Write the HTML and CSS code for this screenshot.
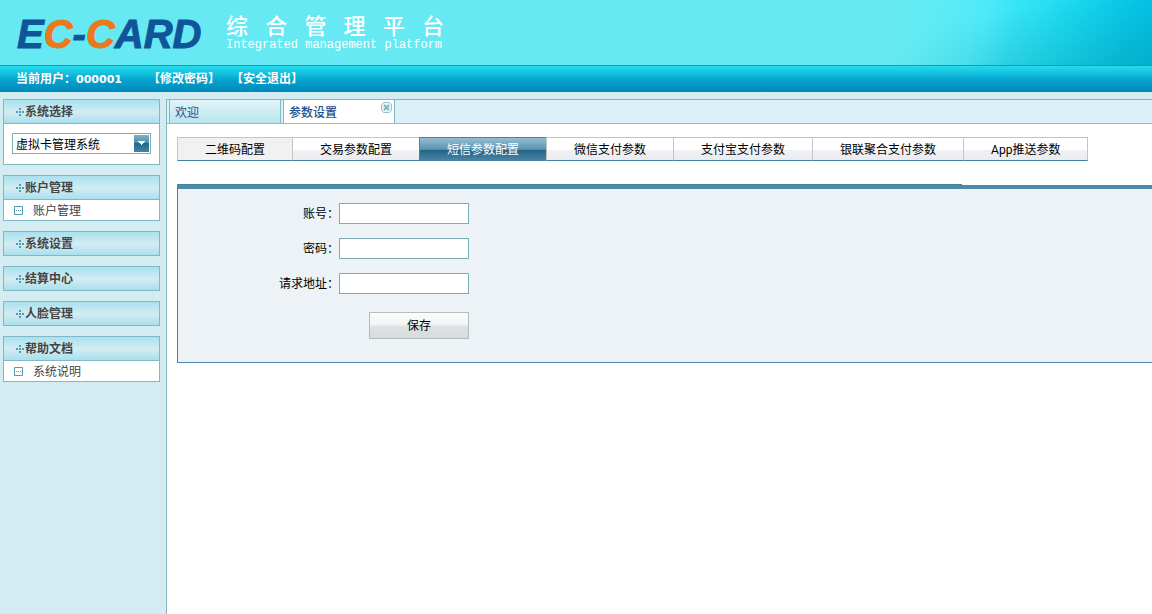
FILE: index.html
```html
<!DOCTYPE html>
<html lang="zh-CN">
<head>
<meta charset="utf-8">
<title>综合管理平台</title>
<link rel="stylesheet" href="styles.css">
</head>
<body>
<svg width="0" height="0" class="defs" aria-hidden="true">
  <symbol id="dots" viewBox="0 0 8 8">
    <path fill="#4f9cb5" d="M3 0h2v2H3zM3 3h2v2H3zM3 6h2v2H3zM0 3h2v2H0zM6 3h2v2H6z"/>
  </symbol>
  <symbol id="leaf" viewBox="0 0 9 9">
    <path fill="none" stroke="#4f9cb5" d="M.5.5h8v8h-8z"/>
    <path fill="#4f9cb5" d="M2 4h1v1H2zM4 4h1v1H4zM6 4h1v1H6z"/>
  </symbol>
</svg>
<header class="banner">
  <div class="logo"><span>E</span><span class="accent">C</span><span>-</span><span class="accent">C</span><span>ARD</span></div>
  <div class="product">
    <h1 class="product-name">综合管理平台</h1>
    <p class="product-sub">Integrated management platform</p>
  </div>
  <div class="banner-art"></div>
</header>
<nav class="userbar">
  <span class="user">当前用户：<b class="user-id">000001</b></span>
  <a class="userlink" href="#">【修改密码】</a>
  <a class="userlink" href="#">【安全退出】</a>
</nav>
<div class="workspace">
  <aside class="sidebar">
    <section class="group">
      <h2 class="group-head"><svg class="dots"><use href="#dots"/></svg><label for="system">系统选择</label></h2>
      <div class="picker">
        <div class="select-wrap">
          <select id="system" class="select"><option>虚拟卡管理系统</option></select>
          <svg class="select-arrow" viewBox="0 0 15 17">
            <defs><linearGradient id="ag" x2="0" y2="1"><stop offset="0" stop-color="#7fb0c5"/><stop offset=".48" stop-color="#4a8bab"/><stop offset=".5" stop-color="#226789"/><stop offset="1" stop-color="#4684a3"/></linearGradient></defs>
            <path fill="url(#ag)" d="M0 0h15v17H0z"/><path fill="#fff" d="M4 6h7v1h-1v1H9v1H8v1H7V9H6V8H5V7H4z"/>
          </svg>
        </div>
      </div>
    </section>
    <section class="group">
      <h2 class="group-head"><svg class="dots"><use href="#dots"/></svg>账户管理</h2>
      <a class="item" href="#"><svg class="leaf"><use href="#leaf"/></svg><span class="item-text">账户管理</span></a>
    </section>
    <section class="group">
      <h2 class="group-head"><svg class="dots"><use href="#dots"/></svg>系统设置</h2>
    </section>
    <section class="group">
      <h2 class="group-head"><svg class="dots"><use href="#dots"/></svg>结算中心</h2>
    </section>
    <section class="group">
      <h2 class="group-head"><svg class="dots"><use href="#dots"/></svg>人脸管理</h2>
    </section>
    <section class="group">
      <h2 class="group-head"><svg class="dots"><use href="#dots"/></svg>帮助文档</h2>
      <a class="item" href="#"><svg class="leaf"><use href="#leaf"/></svg><span class="item-text">系统说明</span></a>
    </section>
  </aside>
  <main class="main">
    <div class="tabs">
      <a class="tab" href="#">欢迎</a>
      <div class="tab tab-on">
        <a class="tab-link" href="#">参数设置</a>
        <button class="tab-close" type="button" aria-label="关闭">
          <svg viewBox="0 0 11 11"><path fill="#e6f6f8" stroke="#93c3cc" d="M2.500.5h6l2 2v6l-2 2h-6l-2-2v-6z"/><path stroke="#7fb4c0" stroke-width="2" d="M3 3l5 5M8 3L3 8"/></svg>
        </button>
      </div>
    </div>
    <div class="content">
      <div class="subtabs">
        <button class="subtab subtab-hover" type="button">二维码配置</button>
        <button class="subtab" type="button">交易参数配置</button>
        <button class="subtab subtab-on" type="button">短信参数配置</button>
        <button class="subtab" type="button">微信支付参数</button>
        <button class="subtab" type="button">支付宝支付参数</button>
        <button class="subtab" type="button">银联聚合支付参数</button>
        <button class="subtab" type="button">App推送参数</button>
      </div>
      <div class="panel-edge"></div>
      <form class="panel">
        <label class="label" for="account">账号：</label><input class="field" id="account" type="text">
        <label class="label" for="secret">密码：</label><input class="field" id="secret" type="text">
        <label class="label" for="address">请求地址：</label><input class="field" id="address" type="text">
        <button class="save" type="button">保存</button>
      </form>
    </div>
  </main>
</div>
</body>
</html>
```
FILE: styles.css
```css
* { box-sizing: border-box; }
body {
  margin: 0;
  min-height: 100vh;
  display: flex;
  flex-direction: column;
  background: #d3ecf1;
  color: #000;
  font: 12px/20px "Noto Sans", "Noto Sans CJK SC", sans-serif;
}
h1, h2, p { margin: 0; }
a { color: inherit; text-decoration: none; }
button, input, select { font: inherit; color: inherit; margin: 0; border-radius: 0; }
.defs { position: absolute; }

.banner {
  display: flex;
  height: 66px;
  background: #66e9f2;
  border-bottom: 1px solid #0f9cbd;
  overflow: hidden;
}
.logo {
  width: 210px;
  padding: 14px 0 0 17px;
  font: italic bold 40px/40px "Liberation Sans", Arial, sans-serif;
  color: #10559a;
  -webkit-text-stroke: 1px currentColor;
  white-space: nowrap;
}
.accent { color: #e87a1c; }
.product { color: #fff; width: 218px; margin-left: 16px; padding-top: 12px; }
.product-name {
  font: 500 22px/24px "Noto Sans CJK SC", sans-serif;
  text-align-last: justify;
  white-space: nowrap;
}
.product-sub { font: 12px/18px "Liberation Mono", monospace; white-space: nowrap; }
.banner-art {
  width: 256px;
  margin-left: auto;
  background:
    linear-gradient(100deg, #66e9f2, rgba(102, 233, 242, 0) 45%),
    linear-gradient(170deg, rgba(0, 130, 140, 0) 25%, rgba(0, 130, 140, .3)),
    linear-gradient(100deg, #5cf0fa, #45e9f9 35%, #20dcf3 62%, #06c8ea 90%, #04c2e8);
}

.userbar {
  display: flex;
  gap: 11px;
  height: 26px;
  padding: 3px 0 0 16px;
  background: linear-gradient(#25dbee, #16c4e0 25%, #04a3cd 55%, #0091c0 85%, #0089ba);
  color: #fff;
  font-weight: bold;
}
.user { margin-right: 15px; }
.user-id { font: bold 11px/20px "DejaVu Sans", sans-serif; }

.workspace { display: flex; flex: 1; padding-top: 7px; }
.sidebar {
  display: flex;
  flex-direction: column;
  gap: 10px;
  width: 166px;
  padding: 0 6px 10px 3px;
}
.group { border: 1px solid #82b7c6; background: #fff; }
.group-head {
  display: flex;
  align-items: center;
  gap: 1px;
  height: 23px;
  padding-left: 12px;
  background: linear-gradient(#a8e1ef, #d3ecf2 52%, #aadfed);
  color: #444;
  font-size: 12px;
  font-weight: bold;
}
.group-head:not(:last-child) { height: 24px; border-bottom: 1px solid #82b7c6; }
.dots { width: 8px; height: 8px; }
.leaf { width: 9px; height: 9px; }
.item {
  display: flex;
  align-items: center;
  gap: 10px;
  height: 20px;
  padding-left: 10px;
  color: #444;
}
.item-text { padding-top: 2px; }
.picker { padding: 9px 8px 10px; }
.select-wrap { position: relative; height: 21px; }
.select {
  display: block;
  width: 100%;
  height: 21px;
  padding: 1px 0 0 3px;
  border: 1px solid #7aadb5;
  background: #fff;
  appearance: none;
}
.select-arrow { position: absolute; top: 2px; right: 2px; width: 15px; height: 17px; pointer-events: none; }

.main { flex: 1; min-width: 0; background: #fff; border: solid #82b7c6; border-width: 1px 0 0 1px; }
.tabs {
  display: flex;
  gap: 2px;
  height: 24px;
  padding-left: 2px;
  background: #dcf0f7;
  box-shadow: inset 0 -1px #8bbfcd;
  color: #1f4f8c;
  line-height: 22px;
}
.tab {
  display: flex;
  justify-content: space-between;
  width: 112px;
  height: 23px;
  padding: 2px 2px 0 5px;
  border: solid #82b7c6;
  border-width: 0 1px;
  background: linear-gradient(#e2f4f8, #b9e4ef);
}
.tab-on { background: #fff; font-weight: 500; }
.tab-close { width: 11px; height: 11px; padding: 0; border: 0; background: none; }
.tab-close svg { display: block; width: 11px; height: 11px; }

.content { padding: 13px 0 0 10px; }
.subtabs { display: flex; }
.subtab {
  height: 24px;
  padding: 2px 27px 0;
  border: solid #c4c4c6;
  border-width: 1px 0 1px 1px;
  border-bottom-color: #3c83a0;
  background: linear-gradient(#fff 52%, #f0f1f4 56%, #ebecf0);
  font-family: Roboto, "Noto Sans CJK SC", sans-serif;
  white-space: nowrap;
}
.subtab:last-child { border-right-width: 1px; }
.subtab-hover { background: #f1f1f1; }
.subtab-on {
  border-color: #4684a3;
  background: linear-gradient(#98bdd0, #5b93b1 52%, #226486 54%, #4684a3);
  color: #fff;
}
.panel-edge { max-width: 785px; height: 1px; margin-top: 23px; background: #4684a3; }
.panel {
  display: grid;
  grid-template-columns: 161px 130px;
  grid-auto-rows: 21px;
  row-gap: 14px;
  padding: 14px 0 33px;
  border: solid #4d8aa7;
  border-width: 4px 0 1px 1px;
  border-left-color: #4684a3;
  background: #ecf2f5;
}
.label { text-align: right; line-height: 22px; }
.field { width: 130px; height: 21px; padding: 0 3px; border: 1px solid #7aadb5; background: #fff; }
.save {
  grid-column: 2;
  justify-self: end;
  width: 100px;
  height: 27px;
  margin-top: 4px;
  padding: 0;
  border: 1px solid #b4bcbd;
  background: linear-gradient(#fbfcfc, #f1f5f5 45%, #dde3e3 55%, #d6dcdc);
}
```
